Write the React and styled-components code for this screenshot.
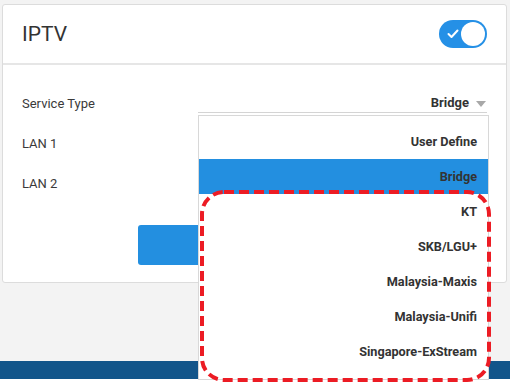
import styled, { createGlobalStyle } from "styled-components";

const GlobalStyle = createGlobalStyle`
    body {
        margin: 0;
        background: #ffffff;
        font-family: Roboto, "Liberation Sans", sans-serif;
    }
`;

const Page = styled.div`
    position: relative;
    width: 510px;
    height: 382px;
    overflow: hidden;
    background: #ffffff;
`;

const Main = styled.div`
    background: #f3f3f3;
    padding: 4px 3px 78px 2px;
`;

const Card = styled.div`
    background: #ffffff;
    border: 1px solid #dcdcdc;
    border-radius: 3px;
    height: 279px;
    box-sizing: border-box;
`;

const CardHeader = styled.div`
    height: 58px;
    display: flex;
    align-items: center;
    justify-content: space-between;
    padding: 0 19px 0 19px;
    border-bottom: 2px solid #e6e6e6;
`;

const Title = styled.h2`
    margin: 0;
    font-size: 21px;
    font-weight: 400;
    color: #333333;
`;

const Toggle = styled.div`
    width: 48px;
    height: 28px;
    border-radius: 14px;
    background: #2590e6;
    position: relative;
    display: flex;
    align-items: center;
    padding-left: 8px;
    box-sizing: border-box;
`;

const Knob = styled.span`
    position: absolute;
    right: 2px;
    top: 2px;
    width: 24px;
    height: 24px;
    border-radius: 50%;
    background: #ffffff;
`;

const CardBody = styled.div`
    padding: 18px 0 0 0;
    display: flex;
    flex-direction: column;
`;

const Row = styled.div`
    height: 40px;
    display: flex;
    align-items: center;
    justify-content: space-between;
    padding: 0 19px 0 19px;
`;

const Label = styled.span`
    font-size: 13px;
    color: #3a3a3a;
`;

const Select = styled.div`
    position: relative;
    width: 289px;
    height: 18px;
    border-bottom: 1px solid #d4d4d4;
    display: flex;
    justify-content: flex-end;
    align-items: center;
    gap: 7px;
    font-size: 13px;
    font-weight: 700;
    color: #333333;
`;

const Caret = styled.span`
    width: 0;
    height: 0;
    border-left: 5px solid transparent;
    border-right: 5px solid transparent;
    border-top: 6px solid #a8a8a8;
    margin-right: 1px;
    margin-top: 2px;
`;

const Menu = styled.ul`
    position: absolute;
    top: 21px;
    left: 0;
    width: 291px;
    height: 265px;
    margin: 0;
    padding: 8px 0 0 0;
    list-style: none;
    box-sizing: border-box;
    background: #ffffff;
    border: 1px solid #d8d8d8;
    z-index: 2;
`;

const Option = styled.li`
    height: 35px;
    display: flex;
    align-items: center;
    justify-content: flex-end;
    padding-right: 11px;
    font-size: 12.7px;
    font-weight: 700;
    color: #333333;
    background: ${(p) => (p.$active ? "#238fe0" : "transparent")};
`;

const Button = styled.button`
    align-self: center;
    margin-top: 22px;
    width: 234px;
    height: 40px;
    border: none;
    border-radius: 3px;
    background: #238fe0;
`;

const Footer = styled.div`
    height: 18px;
    background: #12558a;
`;

const Annotation = styled.svg`
    position: absolute;
    left: 199px;
    top: 189px;
    z-index: 3;
`;

const options = [
    "User Define",
    "Bridge",
    "KT",
    "SKB/LGU+",
    "Malaysia-Maxis",
    "Malaysia-Unifi",
    "Singapore-ExStream",
];

const App = () => {
    return (
        <>
        <GlobalStyle />
        <Page>
            <Main>
                <Card>
                    <CardHeader>
                        <Title>IPTV</Title>
                        <Toggle>
                            <svg width="12" height="10" viewBox="0 0 12 10">
                                <path d="M1.5 5 L4.5 8 L10.5 1.5" fill="none" stroke="#fff" strokeWidth="2" strokeLinecap="round" strokeLinejoin="round" />
                            </svg>
                            <Knob />
                        </Toggle>
                    </CardHeader>
                    <CardBody>
                        <Row>
                            <Label>Service Type</Label>
                            <Select>
                                Bridge
                                <Caret />
                                <Menu>
                                    {options.map((o) => (
                                        <Option key={o} $active={o === "Bridge"}>{o}</Option>
                                    ))}
                                </Menu>
                            </Select>
                        </Row>
                        <Row>
                            <Label>LAN 1</Label>
                        </Row>
                        <Row>
                            <Label>LAN 2</Label>
                        </Row>
                        <Button />
                    </CardBody>
                </Card>
            </Main>
            <Footer />
            <Annotation width="294" height="195" viewBox="0 0 294 195">
                <rect x="3" y="3" width="287" height="188" rx="22" ry="22" fill="none" stroke="#ec1c24" strokeWidth="4" strokeDasharray="10 5" />
            </Annotation>
        </Page>
        </>
    );
};

export default App;
